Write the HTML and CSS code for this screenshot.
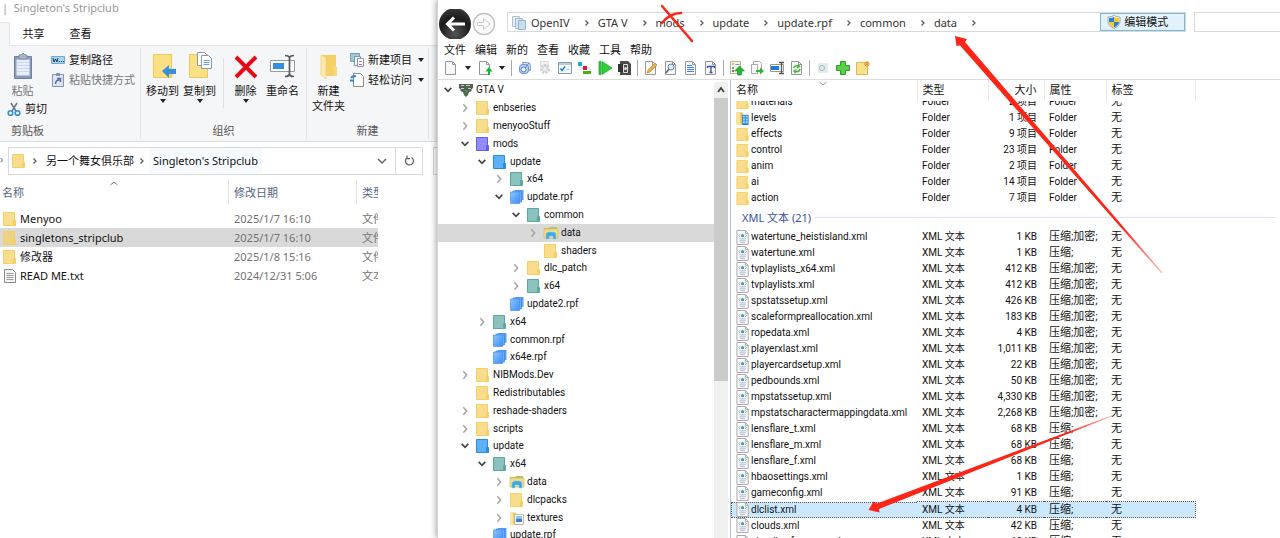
FILE: index.html
```html
<!DOCTYPE html>
<html lang="zh-CN">
<head>
<meta charset="utf-8">
<title>OpenIV</title>
<link rel="stylesheet" href="styles.css">
</head>
<body>
<svg class="defs" aria-hidden="true">
  <defs>
    <linearGradient id="rpfFill" x1="0" y1="0" x2="1" y2="1"><stop offset="0" stop-color="#8cc4ff"/><stop offset="1" stop-color="#3f8ef5"/></linearGradient>
    <linearGradient id="fade1" gradientUnits="userSpaceOnUse" x1="955" y1="36" x2="1162" y2="273"><stop offset="0.8" stop-color="#fb2618"/><stop offset="1" stop-color="#fb2618" stop-opacity="0.3"/></linearGradient>
    <linearGradient id="fade2" gradientUnits="userSpaceOnUse" x1="869" y1="510" x2="1114" y2="415"><stop offset="0.8" stop-color="#fb2618"/><stop offset="1" stop-color="#fb2618" stop-opacity="0.3"/></linearGradient>
    <radialGradient id="backFill" cx="0.5" cy="0.8" r="0.8"><stop offset="0" stop-color="#555"/><stop offset="0.6" stop-color="#1c1c1c"/><stop offset="1" stop-color="#3a3a3a"/></radialGradient>
    <symbol id="folder" viewBox="0 0 16 16"><path d="M1.500 1.500h11v13h-11z" fill="currentColor" fill-opacity=".7" stroke="currentColor"/><path d="M11.500 9.500h2v5h-2z" fill="currentColor" fill-opacity=".8" stroke="currentColor"/></symbol>
    <symbol id="rpf" viewBox="0 0 16 16"><path d="M6 1h8.500v10H6z" fill="#5aa0f5"/><path d="M4 2h8.500v11H4z" fill="#68adf8" stroke="#3f83e6" stroke-width=".7"/><path d="M1.500 3h9v11.500h-9z" fill="url(#rpfFill)" stroke="#4a8ff0" stroke-width=".7"/></symbol>
    <symbol id="datafolder" viewBox="0 0 16 16"><path d="M1 3h5l1-1h7v3H1z" fill="#a8c86a"/><path d="M1 4h14v9H1z" fill="#f3dd8c" stroke="#d9b95a" stroke-width=".7"/><path d="M3 14v-4q0-3 3-3h4q3 0 3 3v4h-3v-3H6v3z" fill="#3fa6e0" stroke="#83cdf2" stroke-width=".6"/></symbol>
    <symbol id="texfolder" viewBox="0 0 16 16"><path d="M1 2.500h6v12H1z" fill="#eccb6c"/><path d="M1 2.500l3 1v12l-3-1z" fill="#fbe7a2"/><path d="M5.500 4.500h9v10h-9z" fill="#fff" stroke="#b8b8a8"/><path d="M7 6h6v3H7z" fill="#86c4ee"/><path d="M7 9h6v3H7z" fill="#3b7fc0"/></symbol>
    <symbol id="levfolder" viewBox="0 0 16 16"><path d="M1 1.500h7v13H1z" fill="#e8c566"/><path d="M1 1.500l4 1v13l-4-1z" fill="#fbe49a"/><path d="M7 4h7v11H7z" fill="#2b84d8"/><path d="M8 5h2v2H8zM11 5h2v2h-2zM8 8h2v2H8zM11 8h2v2h-2zM8 11h2v2H8zM11 11h2v2h-2z" fill="#b5dcfa"/></symbol>
    <symbol id="xml" viewBox="0 0 16 16"><path d="M1.500.5h9l3 3v12h-12z" fill="#fbfbfb" stroke="#a5a5a5"/><path d="M10.500.5v3h3" fill="none" stroke="#a5a5a5"/><circle cx="7.500" cy="6" r="1.700" fill="#36a5a0"/><path d="M5 4.500L3.500 6 5 7.500M10 4.500L11.500 6 10 7.500" fill="none" stroke="#7a80b5" stroke-width=".8"/><path d="M4 9.500h7M4 11.500h7M5 13.500h5" stroke="#a9b3d0"/></symbol>
    <symbol id="gta" viewBox="0 0 16 16"><path d="M1 2h14v4l-2 2 1 1-3 1-1 3-2 2-2-2-1-3-3-1 1-1-2-2z" fill="#555f55"/><path d="M3 3.500h3M8 3.500h4M3 6.500h3M10 6.500h3" stroke="#c5ccc5"/><path d="M6 8h4l-2 5z" fill="#3f8f3a"/></symbol>
    <symbol id="right" viewBox="0 0 12 12"><path d="M4 1.500l4 4.500-4 4.500" fill="none" stroke="#a2a2a2" stroke-width="1.700"/></symbol>
    <symbol id="down" viewBox="0 0 12 12"><path d="M2 3.500l4 4 4-4" fill="none" stroke="#444" stroke-width="2"/></symbol>
    <symbol id="crumb" viewBox="0 0 6 8"><path d="M1.500 1.500L4 4 1.500 6.500" fill="none" stroke="#555" stroke-width="1.200"/></symbol>
    <symbol id="caret" viewBox="0 0 10 6"><path d="M2 1h6L5 5z" fill="#222"/></symbol>
    <symbol id="page" viewBox="0 0 16 16"><path d="M2.500 1.500h7l3 3v10h-10z" fill="#f8f9fb" stroke="#969696"/><path d="M9.500 1.500v3h3" fill="none" stroke="#969696"/></symbol>
  </defs>
</svg>
<main class="desktop">
  <section class="explorer">
    <header class="title">|&nbsp; Singleton's Stripclub</header>
    <div class="tabs"><span class="tab-edge"></span><button>共享</button><button>查看</button></div>
    <div class="ribbon">
      <div class="group clip">
        <div class="tools">
          <div class="stack">
            <button class="big dim"><svg viewBox="0 0 24 28"><path d="M3.500 4.500h17v22h-17z" fill="#8b9bbd" stroke="#6f80a6"/><path d="M5.500 7.500h13v16h-13z" fill="#e8eefa"/><path d="M6 10.500h12M6 13.500h12M6 16.500h12M6 19.500h12" stroke="#cbd6ec"/><path d="M8 3h2l2-2 2 2h2v4H8z" fill="#a9b3c4" stroke="#8390a8"/></svg><span>粘贴</span></button>
            <button class="line cutter"><svg viewBox="0 0 14 14"><path d="M4 1l5 8M10 1L5 9" stroke="#6b7785" stroke-width="1.500"/><circle cx="3.500" cy="11" r="2.300" fill="none" stroke="#2f8fd0" stroke-width="1.600"/><circle cx="10.500" cy="11" r="2.300" fill="none" stroke="#2f8fd0" stroke-width="1.600"/></svg>剪切</button>
          </div>
          <div class="stack side">
            <button class="line"><svg viewBox="0 0 14 14"><path d="M.5 3.500h13v7H.5z" fill="#a9d5f2" stroke="#70aad2"/><path d="M2 5l1 4 1.500-3L6 9l1-4M8 8.500h1M10 8.500h1M12 8.500h1" fill="none" stroke="#23384d"/></svg>复制路径</button>
            <button class="line dim"><svg viewBox="0 0 14 14"><path d="M1.500 1.500h11v12h-11z" fill="#dfe6f3" stroke="#8594b5"/><path d="M5 0h4v3H5z" fill="#8594b5"/><path d="M4.500 11q0-4 4-4M6 5.500h3.500V9" fill="none" stroke="#5d7099" stroke-width="1.500"/></svg>粘贴快捷方式</button>
          </div>
        </div>
        <div class="caption left">剪贴板</div>
      </div>
      <div class="group org">
        <div class="tools">
          <button class="big"><svg viewBox="0 0 24 28"><path d="M2.500 2.500h18v23h-18z" fill="#fbdf83" stroke="#ebc95f"/><path d="M18.500 16.500h3v9h-3z" fill="#f5d06b"/><path d="M11 19l7-6v4h7v5h-7v4z" fill="#3690e0"/></svg><span>移动到</span><svg class="caret"><use href="#caret"/></svg></button>
          <button class="big"><svg viewBox="0 0 24 28"><path d="M1.500 2.500h18v23h-18z" fill="#fbdf83" stroke="#ebc95f"/><path d="M9.500.5h7l3 3v10h-10z" fill="#fff" stroke="#8b99ad"/><path d="M13.500 3.500h7l3 3v10h-10z" fill="#fff" stroke="#8b99ad"/><path d="M15.500 8.500h6M15.500 10.500h6M15.500 12.500h6" stroke="#6ba2e4"/></svg><span>复制到</span><svg class="caret"><use href="#caret"/></svg></button>
          <i class="rule"></i>
          <button class="big"><svg viewBox="0 0 24 28"><path d="M2 5l20 20M22 5L2 25" stroke="#e30b18" stroke-width="4"/></svg><span>删除</span><svg class="caret"><use href="#caret"/></svg></button>
          <button class="big"><svg viewBox="0 0 24 28"><path d="M-.5 8.500h24v11h-24z" fill="#fff" stroke="#999"/><path d="M2 11h11v6H2z" fill="#318fe3"/><path d="M14 3.500q4 0 4.500 2.500v16q-.5 2.500-4.500 2.500M23 3.500q-4 0-4.500 2.500v16q.5 2.500 4.500 2.500" fill="none" stroke="#5a5a5a" stroke-width="1.700"/></svg><span>重命名</span></button>
        </div>
        <div class="caption">组织</div>
      </div>
      <div class="group new">
        <div class="tools">
          <button class="big"><svg viewBox="0 0 24 28"><path d="M5 3h14v21H5z" fill="#f5d067"/><path d="M4 3l5 3v21l-5-4z" fill="#fdeab0" stroke="#edcf73" stroke-width=".7"/><path d="M16 15h4v9h-4z" fill="#f8d873"/></svg><span>新建<br>文件夹</span></button>
          <div class="stack side">
            <button class="line"><svg viewBox="0 0 14 14"><path d="M.5.5h9v8h-9z" fill="#9fc9df" stroke="#7f9aad"/><path d="M4.500 3.500h6v9h-6z" fill="#f5f8fa" stroke="#8394a2"/><path d="M7.500 5.500h6v8h-6z" fill="#fff" stroke="#8394a2"/><path d="M9 8.500h3M9 11.500h3" stroke="#c68"/></svg>新建项目<svg class="caret"><use href="#caret"/></svg></button>
            <button class="line"><svg viewBox="0 0 14 14"><path d="M3.500.5h7l3 3v10h-10z" fill="#fff" stroke="#8b8b8b"/><path d="M0 7.500h4M1 5q1-2 5-2" fill="none" stroke="#2d86cf" stroke-width="1.800"/></svg>轻松访问<svg class="caret"><use href="#caret"/></svg></button>
          </div>
        </div>
        <div class="caption">新建</div>
      </div>
    </div>
    <div class="address">
      <span class="tick">›</span>
      <nav class="path">
        <svg class="ico gold"><use href="#folder"/></svg>
        <svg class="crumb"><use href="#crumb"/></svg><a href="#">另一个舞女俱乐部</a>
        <svg class="crumb"><use href="#crumb"/></svg><a href="#" class="here">Singleton's Stripclub</a>
        <button class="drop" aria-label="历史"><svg viewBox="0 0 12 12"><path d="M2 4l4 4 4-4" fill="none" stroke="#666" stroke-width="1.500"/></svg></button>
        <button class="refresh" aria-label="刷新"><svg viewBox="0 0 12 12"><path d="M8.500 2.500a4 4 0 1 1-4.500.3M4 .5v3.200h3" fill="none" stroke="#666" stroke-width="1.300"/></svg></button>
      </nav>
      <span class="search-edge"></span>
    </div>
    <table class="files">
      <colgroup><col class="c-name"><col class="c-date"><col class="c-kind"></colgroup>
      <thead><tr><th>名称<svg class="sort" viewBox="0 0 8 5"><path d="M.5 4L4 1l3.500 3" fill="none" stroke="#777"/></svg></th><th>修改日期</th><th>类型</th></tr></thead>
      <tbody>
        <tr><td><svg class="ico gold"><use href="#folder"/></svg>Menyoo</td><td>2025/1/7 16:10</td><td>文件夹</td></tr>
        <tr class="sel"><td><svg class="ico gold"><use href="#folder"/></svg>singletons_stripclub</td><td>2025/1/7 16:10</td><td>文件夹</td></tr>
        <tr><td><svg class="ico gold"><use href="#folder"/></svg>修改器</td><td>2025/1/8 15:16</td><td>文件夹</td></tr>
        <tr><td><svg class="ico" viewBox="0 0 16 16"><path d="M2.500 1.500h8l3 3v10h-11z" fill="#f4f4f4" stroke="#8a8a8a"/><path d="M4.500 5.500h7M4.500 7.500h7M4.500 9.500h7M4.500 11.500h7" stroke="#9a9a9a"/></svg>READ ME.txt</td><td>2024/12/31 5:06</td><td>文本文档</td></tr>
      </tbody>
    </table>
  </section>

  <section class="openiv">
    <div class="navbar">
      <button class="back" aria-label="后退"><svg viewBox="0 0 34 30"><circle cx="17" cy="15" r="16" fill="url(#backFill)"/><path d="M27 15H10M16 8.500L9.500 15l6.500 6.500" fill="none" stroke="#fff" stroke-width="3"/></svg></button>
      <button class="fwd" aria-label="前进"><svg viewBox="0 0 24 24"><circle cx="12" cy="12" r="10.500" fill="#fafafa" stroke="#c4c4c4" stroke-width="1.500"/><path d="M5.500 10.500h6v-4l6.500 5.500-6.500 5.500v-4h-6z" fill="#fff" stroke="#c4c4c4"/></svg></button>
      <div class="where">
        <nav class="crumbs">
          <svg class="ico" viewBox="0 0 16 16"><path d="M1.500 1.500h7v10h-7z" fill="#e3ecf2" stroke="#b5c3cc"/><path d="M4.500 3.500h7v10h-7z" fill="#d5e4ef" stroke="#a5bccb"/><path d="M7.500 5.500h7v9h-7z" fill="#c5dff0" stroke="#93b6cb"/></svg>
          <a href="#">OpenIV</a><svg class="crumb"><use href="#crumb"/></svg>
          <a href="#">GTA V</a><svg class="crumb"><use href="#crumb"/></svg>
          <a href="#">mods</a><svg class="crumb"><use href="#crumb"/></svg>
          <a href="#">update</a><svg class="crumb"><use href="#crumb"/></svg>
          <a href="#">update.rpf</a><svg class="crumb"><use href="#crumb"/></svg>
          <a href="#">common</a><svg class="crumb"><use href="#crumb"/></svg>
          <a href="#">data</a><svg class="crumb"><use href="#crumb"/></svg>
        </nav>
        <button class="edit"><svg viewBox="0 0 14 14"><path d="M7 .5q3 1.500 6 1.500v5q0 4-6 6.500Q1 11 1 7V2q3 0 6-1.500z" fill="#fff" stroke="#9aa"/><path d="M7 2v5H2V3q3 0 5-1zM7 7h5q0 3-5 5.500z" fill="#2c7fd6"/><path d="M7 2v5h5V3q-3 0-5-1zM7 7H2q0 3 5 5.500z" fill="#fbc926"/></svg>编辑模式</button>
      </div>
      <input class="search" type="search" aria-label="搜索">
    </div>
    <div class="menu"><button>文件</button><button>编辑</button><button>新的</button><button>查看</button><button>收藏</button><button>工具</button><button>帮助</button></div>
    <div class="toolbar">
      <button aria-label="新建"><svg><use href="#page"/></svg></button><button class="slim" aria-label="更多"><svg><use href="#caret"/></svg></button>
      <button aria-label="导入"><svg viewBox="0 0 16 16"><use href="#page"/><path d="M11 15v-3.500H8.500L12 7l3.500 4.500H13V15z" fill="#17b52a"/></svg></button><button class="slim" aria-label="更多"><svg><use href="#caret"/></svg></button>
      <i class="sep"></i>
      <button aria-label="重建"><svg viewBox="0 0 16 16"><path d="M5.500 2.500h5q3 0 3 3v5h-5z" fill="#cfe0f6" stroke="#7e9fd0"/><rect x="2.500" y="4.500" width="9" height="9" rx="3" fill="#b3cdf0" stroke="#6a90cb"/><circle cx="6.500" cy="9.500" r="2.500" fill="#e7f0fb" stroke="#5d86c6"/><path d="M8 8l4-5" stroke="#5d86c6"/></svg></button>
      <button aria-label="设置" class="faint"><svg viewBox="0 0 16 16"><path d="M3.500 1.500h8v4h-8z" fill="#eee" stroke="#ccc"/><circle cx="8" cy="9" r="3.500" fill="#e5e5e5" stroke="#bbb" stroke-width="3" stroke-dasharray="2 1"/></svg></button>
      <button aria-label="校验"><svg viewBox="0 0 16 16"><path d="M1.500 2.500h13v11h-13z" fill="#f5f9fc" stroke="#8798a6"/><path d="M2 3h12v2H2z" fill="#b9cbd9"/><path d="M3.500 8.500l1.500 2 3-4" fill="none" stroke="#247fc8" stroke-width="1.500"/><path d="M9.500 9.500h3" stroke="#bbb"/></svg></button>
      <button aria-label="树形"><svg viewBox="0 0 16 16"><path d="M1 2h4v4H1z" fill="#1bace4"/><path d="M6 6h4v4H6z" fill="#cb1c50"/><path d="M6 11h8v3H6z" fill="#4aae1b"/><path d="M3 6v2h3M10 8h3v3" fill="none" stroke="#ccc"/></svg></button>
      <button aria-label="运行"><svg viewBox="0 0 16 16"><path d="M2 1.500v13h2v-13zM5 1.500v13L15 8z" fill="#32cf38" stroke="#159c24" stroke-width=".7"/></svg></button>
      <button aria-label="脚本"><svg viewBox="0 0 16 16"><path d="M3 1h8l3 3v11H3z" fill="#4b4b4b"/><path d="M1 4h5v8H1z" fill="#333"/><path d="M6.500 4.500h4v8h-4z" fill="none" stroke="#ddd"/><circle cx="8.500" cy="8.500" r="1.500" fill="#ddd"/></svg></button>
      <i class="sep"></i>
      <button aria-label="编辑"><svg viewBox="0 0 16 16"><use href="#page"/><path d="M4 13l1-3 7-7 2 2-7 7z" fill="#f1b33b" stroke="#b5791c" stroke-width=".6"/></svg></button>
      <button aria-label="预览"><svg viewBox="0 0 16 16"><use href="#page"/><circle cx="8" cy="7" r="3" fill="#dcebf8" stroke="#5d89b8"/><path d="M6 9l-3 4" stroke="#666" stroke-width="1.500"/></svg></button>
      <button aria-label="文本"><svg viewBox="0 0 16 16"><use href="#page"/><path d="M4 5.500h5M4 7.500h7M4 9.500h7M4 11.500h7" stroke="#4380c9"/></svg></button>
      <button aria-label="字体"><svg viewBox="0 0 16 16"><use href="#page"/><path d="M4 6.500h8M8 6.500v6M4.500 6v2M11.500 6v2M6.500 12.500h3" stroke="#3b50a8" stroke-width="1.300"/></svg></button>
      <i class="sep"></i>
      <button aria-label="替换"><svg viewBox="0 0 16 16"><path d="M1.500 1.500h10v12h-10z" fill="#f5f5e8" stroke="#b5b59a"/><path d="M3 3h2v2H3z" fill="#eeb53a"/><path d="M3 7h2v2H3z" fill="#49a6df"/><path d="M3 10h2v2H3z" fill="#d9534f"/><path d="M6.500 4.500h4" stroke="#89a"/><path d="M8.500 15v-4H5.500L10.500 6l5 5h-3v4z" fill="#29b233" stroke="#168a22" stroke-width=".6"/></svg></button>
      <button aria-label="导出"><svg viewBox="0 0 16 16"><path d="M4.500 1.500h6l2 2v8h-8z" fill="#fff" stroke="#aaa"/><path d="M2.500 4.500h6v9h-6z" fill="#fff" stroke="#aaa"/><path d="M7 10h4V7.500l4 3.500-4 3.500V12H7z" fill="#35b52d"/></svg></button>
      <button aria-label="重命名"><svg viewBox="0 0 16 16"><path d="M1.500 4.500h13v7h-13z" fill="#fff" stroke="#999"/><path d="M2 6h8v4H2z" fill="#1f7be0"/><path d="M10 2.500h5M12.500 2v12M10 13.500h5" stroke="#555" stroke-width="1.300"/></svg></button>
      <button aria-label="刷新"><svg viewBox="0 0 16 16"><use href="#page"/><path d="M4.500 8q1-3 5-2M9 4.500l1.500 2L8 8M11 9q-1 3.500-5 2.500M6.500 13L5 11l2.500-1.500" fill="none" stroke="#3fb53a" stroke-width="1.400"/></svg></button>
      <i class="sep"></i>
      <button aria-label="搜索" class="faint"><svg viewBox="0 0 16 16"><path d="M3 3h10v10H3z" fill="#d3e4e8"/><circle cx="7" cy="8" r="2.500" fill="none" stroke="#7d98a0"/></svg></button>
      <button aria-label="添加"><svg viewBox="0 0 16 16"><path d="M5.500 1.500h5v4h4v5h-4v4h-5v-4h-4v-5h4z" fill="#5cce47" stroke="#2b9a25"/></svg></button>
      <button aria-label="新建文件夹"><svg viewBox="0 0 16 16"><path d="M1.500 2.500h11v12h-11z" fill="#fae08a" stroke="#dcb954"/><path d="M12 1v6M9 4h6M10 2l4 4M14 2l-4 4" stroke="#e98c24"/></svg></button>
    </div>
    <div class="panes">
      <ul class="tree">
        <li class="d0"><svg class="tw"><use href="#down"/></svg><svg class="ico"><use href="#gta"/></svg>GTA V</li>
        <li class="d1"><svg class="tw"><use href="#right"/></svg><svg class="ico gold"><use href="#folder"/></svg>enbseries</li>
        <li class="d1"><svg class="tw"><use href="#right"/></svg><svg class="ico gold"><use href="#folder"/></svg>menyooStuff</li>
        <li class="d1"><svg class="tw"><use href="#down"/></svg><svg class="ico violet"><use href="#folder"/></svg>mods</li>
        <li class="d2"><svg class="tw"><use href="#down"/></svg><svg class="ico blue"><use href="#folder"/></svg>update</li>
        <li class="d3"><svg class="tw"><use href="#right"/></svg><svg class="ico teal"><use href="#folder"/></svg>x64</li>
        <li class="d3"><svg class="tw"><use href="#down"/></svg><svg class="ico"><use href="#rpf"/></svg>update.rpf</li>
        <li class="d4"><svg class="tw"><use href="#down"/></svg><svg class="ico teal"><use href="#folder"/></svg>common</li>
        <li class="d5 sel"><svg class="tw"><use href="#right"/></svg><svg class="ico"><use href="#datafolder"/></svg>data</li>
        <li class="d5"><svg class="tw"></svg><svg class="ico gold"><use href="#folder"/></svg>shaders</li>
        <li class="d4"><svg class="tw"><use href="#right"/></svg><svg class="ico gold"><use href="#folder"/></svg>dlc_patch</li>
        <li class="d4"><svg class="tw"><use href="#right"/></svg><svg class="ico teal"><use href="#folder"/></svg>x64</li>
        <li class="d3"><svg class="tw"></svg><svg class="ico"><use href="#rpf"/></svg>update2.rpf</li>
        <li class="d2"><svg class="tw"><use href="#right"/></svg><svg class="ico teal"><use href="#folder"/></svg>x64</li>
        <li class="d2"><svg class="tw"></svg><svg class="ico"><use href="#rpf"/></svg>common.rpf</li>
        <li class="d2"><svg class="tw"></svg><svg class="ico"><use href="#rpf"/></svg>x64e.rpf</li>
        <li class="d1"><svg class="tw"><use href="#right"/></svg><svg class="ico gold"><use href="#folder"/></svg>NIBMods.Dev</li>
        <li class="d1"><svg class="tw"></svg><svg class="ico gold"><use href="#folder"/></svg>Redistributables</li>
        <li class="d1"><svg class="tw"><use href="#right"/></svg><svg class="ico gold"><use href="#folder"/></svg>reshade-shaders</li>
        <li class="d1"><svg class="tw"><use href="#right"/></svg><svg class="ico gold"><use href="#folder"/></svg>scripts</li>
        <li class="d1"><svg class="tw"><use href="#down"/></svg><svg class="ico blue"><use href="#folder"/></svg>update</li>
        <li class="d2"><svg class="tw"><use href="#down"/></svg><svg class="ico teal"><use href="#folder"/></svg>x64</li>
        <li class="d3"><svg class="tw"><use href="#right"/></svg><svg class="ico"><use href="#datafolder"/></svg>data</li>
        <li class="d3"><svg class="tw"><use href="#right"/></svg><svg class="ico gold"><use href="#folder"/></svg>dlcpacks</li>
        <li class="d3"><svg class="tw"><use href="#right"/></svg><svg class="ico"><use href="#texfolder"/></svg>textures</li>
        <li class="d2"><svg class="tw"></svg><svg class="ico"><use href="#rpf"/></svg>update.rpf</li>
      </ul>
      <div class="scroll"><button aria-label="向上滚动"><svg viewBox="0 0 12 12"><path d="M3 8l3-4 3 4" fill="none" stroke="#444" stroke-width="1.800"/></svg></button><div class="thumb"></div></div>
      <div class="listing">
        <table class="list">
          <colgroup><col class="l-name"><col class="l-type"><col class="l-size"><col class="l-attr"><col class="l-tag"><col></colgroup>
          <thead><tr><th>名称<svg class="sort" viewBox="0 0 8 5"><path d="M.5 1L4 4l3.500-3" fill="none" stroke="#999"/></svg></th><th>类型</th><th class="num">大小</th><th>属性</th><th>标签</th><th></th></tr></thead>
          <tbody>
            <tr class="cut"><td><div><svg class="ico gold"><use href="#folder"/></svg>materials</div></td><td><div>Folder</div></td><td class="num"><div>2 项目</div></td><td><div>Folder</div></td><td><div>无</div></td><td></td></tr>
            <tr><td><svg class="ico"><use href="#levfolder"/></svg>levels</td><td>Folder</td><td class="num">1 项目</td><td>Folder</td><td>无</td><td></td></tr>
            <tr><td><svg class="ico gold"><use href="#folder"/></svg>effects</td><td>Folder</td><td class="num">9 项目</td><td>Folder</td><td>无</td><td></td></tr>
            <tr><td><svg class="ico gold"><use href="#folder"/></svg>control</td><td>Folder</td><td class="num">23 项目</td><td>Folder</td><td>无</td><td></td></tr>
            <tr><td><svg class="ico gold"><use href="#folder"/></svg>anim</td><td>Folder</td><td class="num">2 项目</td><td>Folder</td><td>无</td><td></td></tr>
            <tr><td><svg class="ico gold"><use href="#folder"/></svg>ai</td><td>Folder</td><td class="num">14 项目</td><td>Folder</td><td>无</td><td></td></tr>
            <tr><td><svg class="ico gold"><use href="#folder"/></svg>action</td><td>Folder</td><td class="num">7 项目</td><td>Folder</td><td>无</td><td></td></tr>
            <tr class="section"><td colspan="6"><div>XML 文本 (21)</div></td></tr>
            <tr><td><svg class="ico"><use href="#xml"/></svg>watertune_heistisland.xml</td><td>XML 文本</td><td class="num">1 KB</td><td class="cn">压缩;加密;</td><td>无</td><td></td></tr>
            <tr><td><svg class="ico"><use href="#xml"/></svg>watertune.xml</td><td>XML 文本</td><td class="num">1 KB</td><td class="cn">压缩;</td><td>无</td><td></td></tr>
            <tr><td><svg class="ico"><use href="#xml"/></svg>tvplaylists_x64.xml</td><td>XML 文本</td><td class="num">412 KB</td><td class="cn">压缩;加密;</td><td>无</td><td></td></tr>
            <tr><td><svg class="ico"><use href="#xml"/></svg>tvplaylists.xml</td><td>XML 文本</td><td class="num">412 KB</td><td class="cn">压缩;加密;</td><td>无</td><td></td></tr>
            <tr><td><svg class="ico"><use href="#xml"/></svg>spstatssetup.xml</td><td>XML 文本</td><td class="num">426 KB</td><td class="cn">压缩;加密;</td><td>无</td><td></td></tr>
            <tr><td><svg class="ico"><use href="#xml"/></svg>scaleformpreallocation.xml</td><td>XML 文本</td><td class="num">183 KB</td><td class="cn">压缩;加密;</td><td>无</td><td></td></tr>
            <tr><td><svg class="ico"><use href="#xml"/></svg>ropedata.xml</td><td>XML 文本</td><td class="num">4 KB</td><td class="cn">压缩;加密;</td><td>无</td><td></td></tr>
            <tr><td><svg class="ico"><use href="#xml"/></svg>playerxlast.xml</td><td>XML 文本</td><td class="num">1,011 KB</td><td class="cn">压缩;加密;</td><td>无</td><td></td></tr>
            <tr><td><svg class="ico"><use href="#xml"/></svg>playercardsetup.xml</td><td>XML 文本</td><td class="num">22 KB</td><td class="cn">压缩;加密;</td><td>无</td><td></td></tr>
            <tr><td><svg class="ico"><use href="#xml"/></svg>pedbounds.xml</td><td>XML 文本</td><td class="num">50 KB</td><td class="cn">压缩;加密;</td><td>无</td><td></td></tr>
            <tr><td><svg class="ico"><use href="#xml"/></svg>mpstatssetup.xml</td><td>XML 文本</td><td class="num">4,330 KB</td><td class="cn">压缩;加密;</td><td>无</td><td></td></tr>
            <tr><td><svg class="ico"><use href="#xml"/></svg>mpstatscharactermappingdata.xml</td><td>XML 文本</td><td class="num">2,268 KB</td><td class="cn">压缩;加密;</td><td>无</td><td></td></tr>
            <tr><td><svg class="ico"><use href="#xml"/></svg>lensflare_t.xml</td><td>XML 文本</td><td class="num">68 KB</td><td class="cn">压缩;</td><td>无</td><td></td></tr>
            <tr><td><svg class="ico"><use href="#xml"/></svg>lensflare_m.xml</td><td>XML 文本</td><td class="num">68 KB</td><td class="cn">压缩;</td><td>无</td><td></td></tr>
            <tr><td><svg class="ico"><use href="#xml"/></svg>lensflare_f.xml</td><td>XML 文本</td><td class="num">68 KB</td><td class="cn">压缩;</td><td>无</td><td></td></tr>
            <tr><td><svg class="ico"><use href="#xml"/></svg>hbaosettings.xml</td><td>XML 文本</td><td class="num">1 KB</td><td class="cn">压缩;</td><td>无</td><td></td></tr>
            <tr><td><svg class="ico"><use href="#xml"/></svg>gameconfig.xml</td><td>XML 文本</td><td class="num">91 KB</td><td class="cn">压缩;</td><td>无</td><td></td></tr>
            <tr class="sel"><td><svg class="ico"><use href="#xml"/></svg>dlclist.xml</td><td>XML 文本</td><td class="num">4 KB</td><td class="cn">压缩;</td><td>无</td><td></td></tr>
            <tr><td><svg class="ico"><use href="#xml"/></svg>clouds.xml</td><td>XML 文本</td><td class="num">42 KB</td><td class="cn">压缩;</td><td>无</td><td></td></tr>
            <tr><td><svg class="ico"><use href="#xml"/></svg>cloudkeyframes.xml</td><td>XML 文本</td><td class="num">68 KB</td><td class="cn">压缩;</td><td>无</td><td></td></tr>
          </tbody>
        </table>
      </div>
    </div>
  </section>
  <svg class="marks" width="1280" height="538" viewBox="0 0 1280 538" aria-hidden="true">
    <path d="M662 6L692 41M662 23Q670 13 681 13" fill="none" stroke="#fb2618" stroke-width="2.500" stroke-linecap="round"/>
    <path d="M955 36l1.500 10 3.500-.5L1161.500 273.500l1-1L965 42l2-3z" fill="url(#fade1)"/>
    <path d="M868.500 510l5-8.500 3.500 2L1114 414.500v1L879 509l.5 3.500z" fill="url(#fade2)"/>
  </svg>
</main>
</body>
</html>
```
FILE: styles.css
```css
* { box-sizing: border-box; }
body {
  margin: 0;
  background: #fff;
  color: #111;
  font: 11px/16px "Noto Sans", "Noto Sans CJK SC", sans-serif;
}
button {
  margin: 0;
  padding: 0;
  border: 0;
  background: none;
  color: inherit;
  font: inherit;
}
a { color: inherit; text-decoration: none; }
svg { display: block; flex: none; overflow: visible; }
.defs { position: absolute; width: 0; height: 0; }
.ico { width: 16px; height: 16px; }
.gold { color: #f5cf60; }
.violet { color: #625cf2; }
.blue { color: #1d8ff2; }
.teal { color: #5aa8a2; }
.crumb { width: 6px; height: 8px; }
.caret { width: 10px; height: 6px; }

.desktop {
  position: relative;
  display: flex;
  height: 100vh;
  overflow: hidden;
}
.explorer { flex: 0 0 437px; min-width: 0; overflow: hidden; }
.openiv {
  position: relative;
  display: flex;
  flex: 1;
  flex-direction: column;
  min-width: 0;
  background: #fff;
  border-left: 1px solid #d5d5d5;
  box-shadow: -1px 0 6px rgba(0, 0, 0, .35);
}
.marks { position: absolute; top: 0; left: 0; pointer-events: none; }

/* file explorer */
.title { height: 22px; padding-left: 2px; line-height: 16px; color: #999; }
.tabs { display: flex; height: 24px; border-bottom: 1px solid #e3e4e5; }
.tabs button { width: 47px; }
.tab-edge {
  width: 10px;
  height: 24px;
  background: #f5f6f7;
  border-top: 1px solid #e3e4e5;
  border-right: 1px solid #e3e4e5;
}
.ribbon {
  display: flex;
  height: 96px;
  padding: 2px 0;
  background: #f5f6f7;
  border-bottom: 1px solid #dcddde;
}
.group {
  display: flex;
  flex-direction: column;
  justify-content: space-between;
  border-right: 1px solid #e2e3e4;
}
.clip { width: 141px; }
.org { width: 166px; }
.new { width: 122px; }
.tools { display: flex; padding-top: 4px; }
.org .tools { padding-left: 3px; }
.new .tools { padding-left: 3px; }
.caption { line-height: 16px; color: #555; text-align: center; }
.caption.left { padding-left: 11px; text-align: left; }
.big {
  display: flex;
  flex-direction: column;
  align-items: center;
  width: 37px;
  line-height: 15px;
}
.big svg { width: 24px; height: 28px; }
.big span { padding-top: 3px; }
.big .caret { width: 10px; height: 6px; }
.rule { width: 1px; height: 50px; margin: 6px 3px 0 5px; background: #dfe0e1; }
.dim { color: #777; }
.stack { display: flex; flex-direction: column; align-items: flex-start; }
.stack:first-child { padding-left: 4px; }
.line { display: flex; gap: 4px; align-items: center; height: 16px; white-space: nowrap; }
.line svg { width: 14px; height: 14px; }
.line .caret { width: 10px; height: 6px; }
.clip .stack:first-child .line { padding-left: 3px; }
.cutter { margin-top: 3px; }
.side { gap: 4px; }
.new .side { margin-left: 3px; }
.clip .side { margin-left: -4px; }
.clip .stack:first-child { width: 55px; }

.address { display: flex; gap: 4px; padding-top: 5px; height: 33px; }
.tick { width: 4px; line-height: 24px; color: #777; }
.path { display: flex; flex: 1; align-items: center; border: 1px solid #d9d9d9; padding-left: 2px; }
.path a { margin-left: 8px; }
.path .crumb { margin-left: 5px; }
.path .here { display: flex; align-items: center; align-self: stretch; margin-left: 4px; padding: 0 4px; background: #f6fafd; }
.drop { margin-left: auto; padding: 0 7px; }
.drop svg, .refresh svg { width: 12px; height: 12px; }
.refresh { align-self: stretch; width: 27px; padding-left: 7px; border-left: 1px solid #d9d9d9; }
.search-edge { width: 4px; margin-left: 6px; border: 1px solid #d9d9d9; border-right: 0; }
.files { width: 378px; margin-top: 5px; table-layout: fixed; border-collapse: collapse; }
.c-name { width: 229px; }
.c-date { width: 128px; }
.files th { height: 29px; padding: 0 0 4px 5px; color: #50647f; font-weight: 400; text-align: left; white-space: nowrap; overflow: hidden; position: relative; }
.files th:first-child { padding-left: 2px; }
.files th:not(:last-child) { background: linear-gradient(#e5e5e5, #e5e5e5) right top / 1px 24px no-repeat; }
.sort { position: absolute; top: 1px; left: 50%; width: 8px; height: 5px; margin-left: -5px; }
.files td { height: 19px; padding: 0 0 0 5px; color: #737373; white-space: nowrap; overflow: hidden; }
.files td:first-child { display: flex; gap: 2px; align-items: center; padding-left: 2px; color: #111; }
.files .sel { background: #d9d9d9; }

/* archive browser */
.navbar { display: flex; align-items: center; height: 40px; padding-top: 4px; }
.back svg { width: 34px; height: 30px; }
.back { overflow: hidden; margin-top: 4px; }
.fwd { margin-top: 4px; }
.fwd svg { width: 24px; height: 24px; }
.where { display: flex; flex: 8 1 0; height: 20px; min-width: 0; margin-left: 11px; border: 1px solid #d9d9d9; }
.crumbs { display: flex; flex: 1; align-items: center; min-width: 0; padding: 2px 0 0 3px; color: #333; }
.crumbs a { margin-left: 8px; white-space: nowrap; }
.crumbs .ico { margin-right: -4px; }
.crumbs .crumb { margin-left: 14px; }
.edit { display: flex; gap: 3px; align-items: center; width: 85px; padding-left: 6px; background: #e2f1fa; border: 1px solid #7ab8dc; }
.edit svg { width: 14px; height: 14px; }
.search { flex: 1 1 0; min-width: 0; height: 20px; margin-left: 8px; padding: 0; border: 1px solid #d9d9d9; border-right: 0; background: #fff; }
.menu { display: flex; gap: 9px; height: 18px; padding: 1px 6px 0; }
.toolbar { display: flex; gap: 4px; align-items: center; height: 20px; padding-left: 5px; }
.toolbar button, .toolbar button svg { width: 16px; height: 16px; }
.toolbar .slim, .toolbar .slim svg { width: 10px; }
.toolbar .slim svg { height: 6px; }
.faint { opacity: .7; }
.sep { width: 2px; height: 16px; border-left: 1px solid #aaa; }
.panes { display: flex; flex: 1; min-height: 0; margin-top: 1px; border-top: 1px solid #dcdcdc; font-family: Roboto, "Noto Sans CJK SC", sans-serif; font-size: 10px; }
.tree { flex: 0 0 276px; margin: 0; padding: 1px 0 0; overflow: hidden; list-style: none; }
.tree li { display: flex; align-items: center; height: 18px; }
.tree li:nth-child(5n) { height: 17px; }
.tree .tw { width: 10px; height: 10px; margin: 0 5px 0 1px; }
.tree .ico { margin-right: 2px; }
.tree .sel { background: #d9d9d9; }
.d0 { padding-left: 4px; }
.d1 { padding-left: 21px; }
.d2 { padding-left: 38px; }
.d3 { padding-left: 55px; }
.d4 { padding-left: 72px; }
.d5 { padding-left: 89px; }
.scroll { flex: 0 0 14px; margin-top: 2px; background: #f0f0f0; }
.scroll button { display: block; height: 16px; padding-left: 1px; }
.scroll svg { width: 12px; height: 12px; }
.thumb { height: 62%; background: #cbcbcb; }
.listing { flex: 1; min-width: 0; margin-left: 2px; overflow: hidden; border-left: 1px solid #b5c5d5; }
.list { width: 100%; table-layout: fixed; border-collapse: collapse; }
.l-name { width: 186px; }
.l-type { width: 71px; }
.l-size { width: 56px; }
.l-attr { width: 62px; }
.l-tag { width: 89px; }
.list th { position: relative; height: 21px; padding: 1px 5px 0; border-right: 1px solid #e8e8e8; font-size: 11px; font-weight: 400; text-align: left; }
.list th:last-child { border-right: 0; }
.list td { height: 16px; padding: 0 5px; line-height: 16px; white-space: nowrap; }
.list td:first-child { display: flex; align-items: center; padding-left: 4px; }
.list .num { text-align: right; padding-right: 7px; }
.list .num + td { padding-left: 5px; }
.list td:nth-child(5), .list .cn { font-size: 11px; }
.list td .ico { height: 15px; }
.list .cut td { height: 9px; }
.cut div { display: flex; align-items: flex-end; height: 9px; overflow: hidden; }
.cut .num div { justify-content: flex-end; }
.list .section td { display: table-cell; height: 23px; padding-left: 11px; }
.section div { display: flex; gap: 4px; align-items: center; color: #3a4fa0; font: 11px/16px "Noto Sans", "Noto Sans CJK SC", sans-serif; }
.section div::after { flex: 1; height: 1px; background: #dfe1f2; content: ""; }
.list .sel td:not(:last-child) { background: #cce8ff; border-top: 1px dotted #555; border-bottom: 1px dotted #555; line-height: 14px; }
.list .sel td:nth-child(5) { border-right: 1px dotted #555; }
.list .sel td:first-child { padding-left: 3px; border-left: 1px dotted #555; }
```
